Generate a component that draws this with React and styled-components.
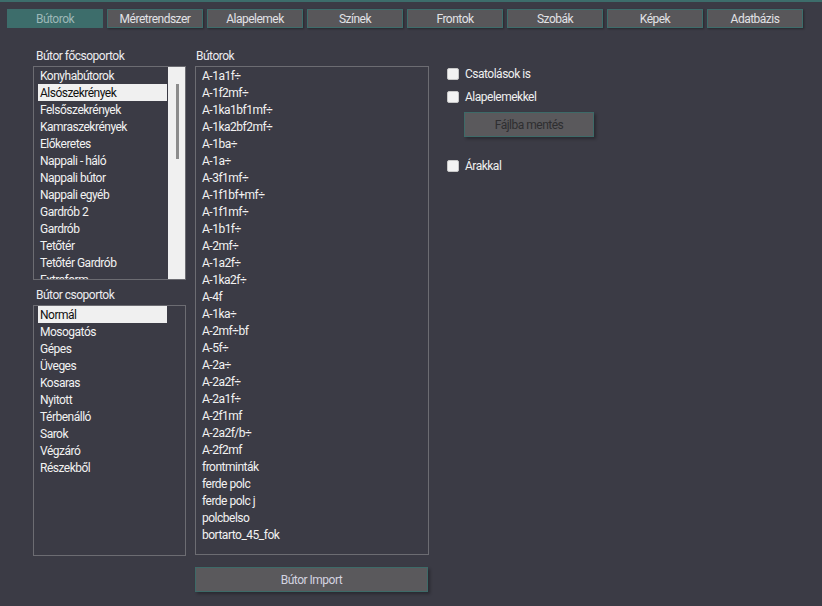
import React from 'react'
import styled, { createGlobalStyle } from 'styled-components'

const GlobalStyle = createGlobalStyle`
  html, body {
    margin: 0;
    padding: 0;
    background: #3b3b45;
  }
  body {
    font-family: Roboto, "Liberation Sans", Arial, sans-serif;
    font-size: 12px;
    letter-spacing: -0.5px;
    color: #f0f0f0;
  }
`

const Window = styled.div`
  width: 822px;
  height: 606px;
  box-sizing: border-box;
  border-top: 2px solid #3d6d6b;
  background: #3b3b45;
  overflow: hidden;
`

const TabBar = styled.div`
  display: flex;
  gap: 4px;
  padding: 7px 0 0 7px;
`

const Tab = styled.div`
  width: 96px;
  height: 19px;
  box-sizing: border-box;
  display: flex;
  align-items: center;
  justify-content: center;
  padding-top: 1px;
  font-size: 12px;
  color: ${(props) => props.active ? '#9db8b8' : '#e2e2e6'};
  background: ${(props) => props.active ? '#3d6d6b' : '#58575a'};
  border: 1px solid #3d6d6b;
  box-shadow: ${(props) => props.active ? 'none' : '1px 1px 2px rgba(0,0,0,0.35)'};
`

const Main = styled.div`
  display: flex;
  align-items: flex-start;
  padding: 19px 0 0 33px;
`

const Column = styled.div`
  display: flex;
  flex-direction: column;
  width: ${(props) => props.width}px;
  margin-left: ${(props) => props.offset || 0}px;
`

const Label = styled.div`
  height: 19px;
  line-height: 19px;
  padding-left: ${(props) => props.indent || 3}px;
  margin-top: ${(props) => props.spaced ? 6 : 0}px;
  color: #ececf0;
  font-size: 12px;
`

const ListBox = styled.div`
  display: flex;
  height: ${(props) => props.height}px;
  box-sizing: border-box;
  border: 1px solid #6c6c72;
  overflow: hidden;
`

const Items = styled.div`
  flex: 1;
  display: flex;
  flex-direction: column;
`

const Item = styled.div`
  flex: none;
  height: 17px;
  box-sizing: border-box;
  padding-top: 2px;
  line-height: 15px;
  width: ${(props) => props.fixed ? '129px' : 'auto'};
  margin-left: 4px;
  padding-left: 2px;
  font-size: 12px;
  white-space: nowrap;
  color: ${(props) => props.selected ? '#111' : '#f2f2f2'};
  background: ${(props) => props.selected ? '#f0f0f0' : 'transparent'};
`

const ScrollTrack = styled.div`
  width: 17px;
  flex: none;
  background: #f0f0f0;
  padding-top: 17px;
  box-sizing: border-box;
`

const ScrollThumb = styled.div`
  width: 3px;
  height: 75px;
  margin-left: 8px;
  background: #8c8c8c;
`

const PushButton = styled.div`
  height: 25px;
  width: ${(props) => props.width}px;
  box-sizing: border-box;
  margin-top: ${(props) => props.top}px;
  margin-left: ${(props) => props.left || 0}px;
  display: flex;
  align-items: center;
  justify-content: center;
  padding-top: 1px;
  background: #5a595c;
  border: 1px solid #3d6a68;
  box-shadow: 2px 2px 3px rgba(0,0,0,0.3);
  font-size: 12px;
  color: ${(props) => props.disabled ? '#2e2e30' : '#d4d4e0'};
`

const CheckRow = styled.label`
  display: flex;
  align-items: center;
  height: 17px;
  margin-top: ${(props) => props.top}px;
  font-size: 12px;
  color: #f0f0f0;
`

const CheckBox = styled.span`
  width: 12px;
  height: 12px;
  box-sizing: border-box;
  border-radius: 2px;
  background: #f3f3f3;
  border: 1px solid #c8c8c8;
  margin-right: 6px;
`

const mainGroups = [
  'Konyhabútorok', 'Alsószekrények', 'Felsőszekrények', 'Kamraszekrények', 'Előkeretes',
  'Nappali - háló', 'Nappali bútor', 'Nappali egyéb', 'Gardrób 2', 'Gardrób', 'Tetőtér',
  'Tetőtér Gardrób', 'Extraform'
]

const groups = [
  'Normál', 'Mosogatós', 'Gépes', 'Üveges', 'Kosaras', 'Nyitott', 'Térbenálló', 'Sarok',
  'Végzáró', 'Részekből'
]

const furniture = [
  'A-1a1f÷', 'A-1f2mf÷', 'A-1ka1bf1mf÷', 'A-1ka2bf2mf÷', 'A-1ba÷', 'A-1a÷', 'A-3f1mf÷',
  'A-1f1bf+mf÷', 'A-1f1mf÷', 'A-1b1f÷', 'A-2mf÷', 'A-1a2f÷', 'A-1ka2f÷', 'A-4f', 'A-1ka÷',
  'A-2mf÷bf', 'A-5f÷', 'A-2a÷', 'A-2a2f÷', 'A-2a1f÷', 'A-2f1mf', 'A-2a2f/b÷', 'A-2f2mf',
  'frontminták', 'ferde polc', 'ferde polc j', 'polcbelso', 'bortarto_45_fok'
]

const tabs = ['Bútorok', 'Méretrendszer', 'Alapelemek', 'Színek', 'Frontok', 'Szobák', 'Képek', 'Adatbázis']

const App = () => {
  return (
    <Window>
      <GlobalStyle />
      <TabBar>
        {tabs.map((t, i) => <Tab key={t} active={i === 0}>{t}</Tab>)}
      </TabBar>
      <Main>
        <Column width={153}>
          <Label>Bútor főcsoportok</Label>
          <ListBox height={214}>
            <Items>
              {mainGroups.map((g) => <Item key={g} fixed selected={g === 'Alsószekrények'}>{g}</Item>)}
            </Items>
            <ScrollTrack>
              <ScrollThumb />
            </ScrollTrack>
          </ListBox>
          <Label spaced>Bútor csoportok</Label>
          <ListBox height={251}>
            <Items>
              {groups.map((g) => <Item key={g} fixed selected={g === 'Normál'}>{g}</Item>)}
            </Items>
          </ListBox>
        </Column>
        <Column width={234} offset={9}>
          <Label indent={1}>Bútorok</Label>
          <ListBox height={489}>
            <Items>
              {furniture.map((f) => <Item key={f}>{f}</Item>)}
            </Items>
          </ListBox>
          <PushButton width={233} top={12}>Bútor Import</PushButton>
        </Column>
        <Column width={200} offset={18}>
          <CheckRow top={18}><CheckBox />Csatolások is</CheckRow>
          <CheckRow top={6}><CheckBox />Alapelemekkel</CheckRow>
          <PushButton width={130} top={7} left={17} disabled>Fájlba mentés</PushButton>
          <CheckRow top={20}><CheckBox />Árakkal</CheckRow>
        </Column>
      </Main>
    </Window>
  )
}

export default App
